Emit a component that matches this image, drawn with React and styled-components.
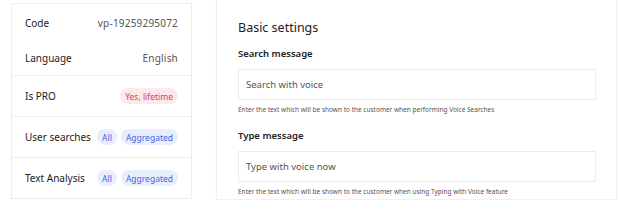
import styled, { createGlobalStyle } from "styled-components";

const GlobalStyle = createGlobalStyle`
    body {
        margin: 0;
        background: #fff;
        font-family: "Noto Sans", "Open Sans", sans-serif;
        color: #222;
    }
`;

const Page = styled.div`
    width: 640px;
    height: 200px;
    overflow: hidden;
    display: flex;
    align-items: flex-start;
    padding: 3px 0 0 11px;
    box-sizing: border-box;
    gap: 24px;
`;

const InfoCard = styled.div`
    width: 181px;
    border: 1px solid #ededed;
    border-bottom: none;
    box-sizing: border-box;
    flex-shrink: 0;
`;

const Group = styled.div`
    border-bottom: 1px solid #ededed;
    padding: ${(p) => (p.$tall ? "2px 0 0" : "0")};
`;

const Row = styled.div`
    height: ${(p) => p.$h || 40}px;
    display: flex;
    align-items: center;
    justify-content: space-between;
    padding: 0 13px 0 13px;
    gap: 4px;
`;

const Label = styled.span`
    font-size: 10px;
    color: #222;
    white-space: nowrap;
`;

const Value = styled.span`
    font-size: 10px;
    color: #555;
    letter-spacing: 0.2px;
`;

const Pills = styled.div`
    display: flex;
    gap: 4px;
`;

const Pill = styled.span`
    height: 16px;
    display: inline-flex;
    align-items: center;
    font-size: 8.5px;
    padding: 0 5px;
    border-radius: 8px;
    background: ${(p) => (p.$tone === "red" ? "#fde9eb" : "#e9eefe")};
    color: ${(p) => (p.$tone === "red" ? "#d8404f" : "#3f66d8")};
    white-space: nowrap;
`;

const Settings = styled.div`
    width: 401px;
    height: 205px;
    margin-top: -8px;
    border: 1px solid #f0f0f0;
    box-shadow: 0 0 3px rgba(0, 0, 0, 0.04);
    box-sizing: border-box;
    padding: 23px 20px 0 21px;
    flex-shrink: 0;
`;

const Title = styled.div`
    font-size: 12.5px;
    color: #222;
    margin-bottom: 11px;
`;

const FieldLabel = styled.div`
    font-size: 9.5px;
    font-weight: 600;
    color: #222;
    margin-bottom: 9px;
`;

const Input = styled.div`
    height: 31px;
    border: 1px solid #ececec;
    box-sizing: border-box;
    display: flex;
    align-items: center;
    padding-left: 7px;
    font-size: 9.5px;
    color: #555;
`;

const Help = styled.div`
    font-size: 6.5px;
    color: #555;
    margin-top: 5px;
    margin-bottom: 15px;
`;

export default function App() {
    return (
        <>
            <GlobalStyle />
            <Page>
                <InfoCard>
                    <Group $tall>
                        <Row $h={34}>
                            <Label>Code</Label>
                            <Value>vp-19259295072</Value>
                        </Row>
                        <Row $h={35}>
                            <Label>Language</Label>
                            <Value>English</Value>
                        </Row>
                    </Group>
                    <Group>
                        <Row>
                            <Label>Is PRO</Label>
                            <Pill $tone="red">Yes, lifetime</Pill>
                        </Row>
                    </Group>
                    <Group>
                        <Row>
                            <Label>User searches</Label>
                            <Pills>
                                <Pill>All</Pill>
                                <Pill>Aggregated</Pill>
                            </Pills>
                        </Row>
                    </Group>
                    <Group>
                        <Row>
                            <Label>Text Analysis</Label>
                            <Pills>
                                <Pill>All</Pill>
                                <Pill>Aggregated</Pill>
                            </Pills>
                        </Row>
                    </Group>
                </InfoCard>
                <Settings>
                    <Title>Basic settings</Title>
                    <FieldLabel>Search message</FieldLabel>
                    <Input>Search with voice</Input>
                    <Help>Enter the text which will be shown to the customer when performing Voice Searches</Help>
                    <FieldLabel>Type message</FieldLabel>
                    <Input>Type with voice now</Input>
                    <Help>Enter the text which will be shown to the customer when using Typing with Voice feature</Help>
                </Settings>
            </Page>
        </>
    );
}
